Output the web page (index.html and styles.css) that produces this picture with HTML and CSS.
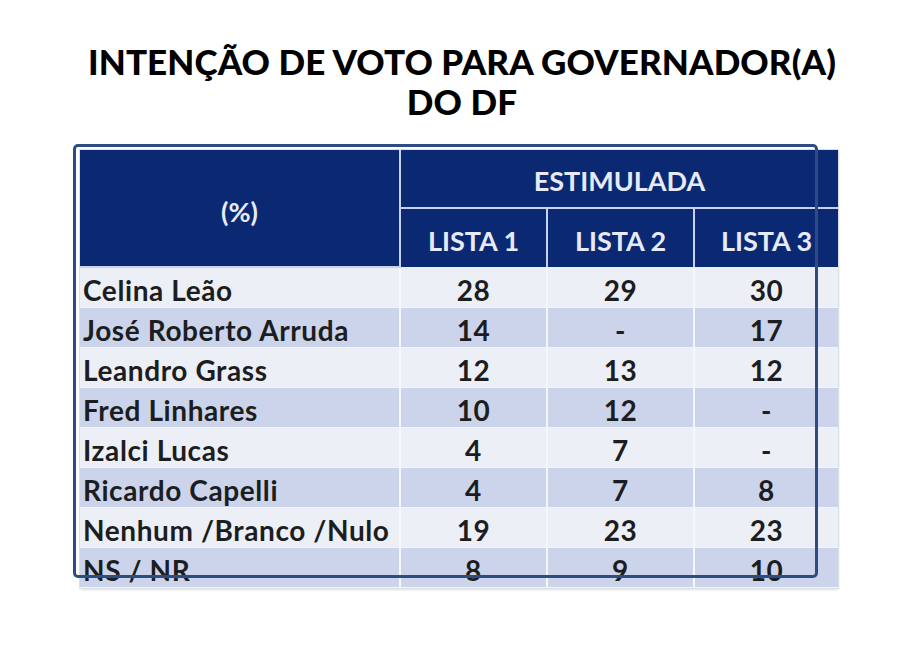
FILE: index.html
```html
<!DOCTYPE html>
<html lang="pt">
<head>
<meta charset="utf-8">
<title>Intenção de voto</title>
<link rel="stylesheet" href="styles.css">
</head>
<body>
<main class="page">
  <h1 class="title">INTENÇÃO DE VOTO PARA GOVERNADOR(A)<br>DO DF</h1>
  <div class="table-wrap">
    <table class="poll">
      <colgroup>
        <col class="c-name"><col class="c-num"><col class="c-num"><col class="c-num3">
      </colgroup>
      <thead>
        <tr class="h1">
          <th rowspan="2" class="pct">(%)</th>
          <th colspan="3">ESTIMULADA</th>
        </tr>
        <tr class="h2">
          <th>LISTA 1</th><th>LISTA 2</th><th>LISTA 3</th>
        </tr>
      </thead>
      <tbody>
        <tr><td>Celina Leão</td><td>28</td><td>29</td><td>30</td></tr>
        <tr><td>José Roberto Arruda</td><td>14</td><td>-</td><td>17</td></tr>
        <tr><td>Leandro Grass</td><td>12</td><td>13</td><td>12</td></tr>
        <tr><td>Fred Linhares</td><td>10</td><td>12</td><td>-</td></tr>
        <tr><td>Izalci Lucas</td><td>4</td><td>7</td><td>-</td></tr>
        <tr><td>Ricardo Capelli</td><td>4</td><td>7</td><td>8</td></tr>
        <tr><td>Nenhum /Branco /Nulo</td><td>19</td><td>23</td><td>23</td></tr>
        <tr><td>NS / NR</td><td>8</td><td>9</td><td>10</td></tr>
      </tbody>
    </table>
    <div class="highlight"></div>
  </div>
</main>
</body>
</html>
```
FILE: styles.css
```css
html, body {
  margin: 0;
  padding: 0;
  background: #ffffff;
}

.page {
  width: 924px;
  height: 664px;
  overflow: hidden;
  font-family: Lato, "Open Sans", "Liberation Sans", sans-serif;
}

.title {
  margin: 0;
  padding-top: 41px;
  text-align: center;
  font-size: 35px;
  line-height: 40px;
  font-weight: 900;
  color: #000000;
  letter-spacing: 0.1px;
}

.table-wrap {
  position: relative;
  width: 758px;
  margin: 29px 0 0 80px;
  box-shadow: 0 0 0 1px #dcdfe6, 1px 2px 2px rgba(0,0,0,0.12);
}

.poll {
  width: 758px;
  border-collapse: collapse;
  table-layout: fixed;
}

.c-name { width: 320px; }
.c-num { width: 147px; }
.c-num3 { width: 144px; }

.poll th {
  background: #0b2872;
  color: #e6ebf7;
  font-weight: 700;
  font-size: 27px;
  line-height: 30px;
  text-align: center;
  border: 2px solid #c7d3ee;
  padding: 0;
}

.poll thead tr.h1 th { height: 52px; border-top: none; padding-top: 5px; }
.poll thead tr.h2 th { height: 52px; padding-top: 6px; border-bottom: none; }
.poll thead tr.h1 th.pct { border-left: none; padding-top: 8px; }
.poll thead tr th:last-child { border-right: none; }

.poll td {
  height: 34px;
  padding: 5px 0 0 0;
  font-size: 28px;
  line-height: 30px;
  font-weight: 700;
  color: #1c1d20;
  text-align: center;
  letter-spacing: 0.6px;
  border-left: 2px solid #f6f7fb;
  border-right: 2px solid #f6f7fb;
  border-bottom: 1px solid #f4f5fa;
}

.poll td:first-child {
  text-align: left;
  padding-left: 3px;
  border-left: none;
}
.poll td:last-child { border-right: none; }

.poll tbody tr:nth-child(odd) td { background: #eceff6; }
.poll tbody tr:nth-child(even) td { background: #cbd4ea; }

.highlight {
  position: absolute;
  left: -7px;
  top: -6px;
  width: 739px;
  height: 428px;
  border: 3px solid #2f4c82;
  border-radius: 5px;
  pointer-events: none;
}
```
